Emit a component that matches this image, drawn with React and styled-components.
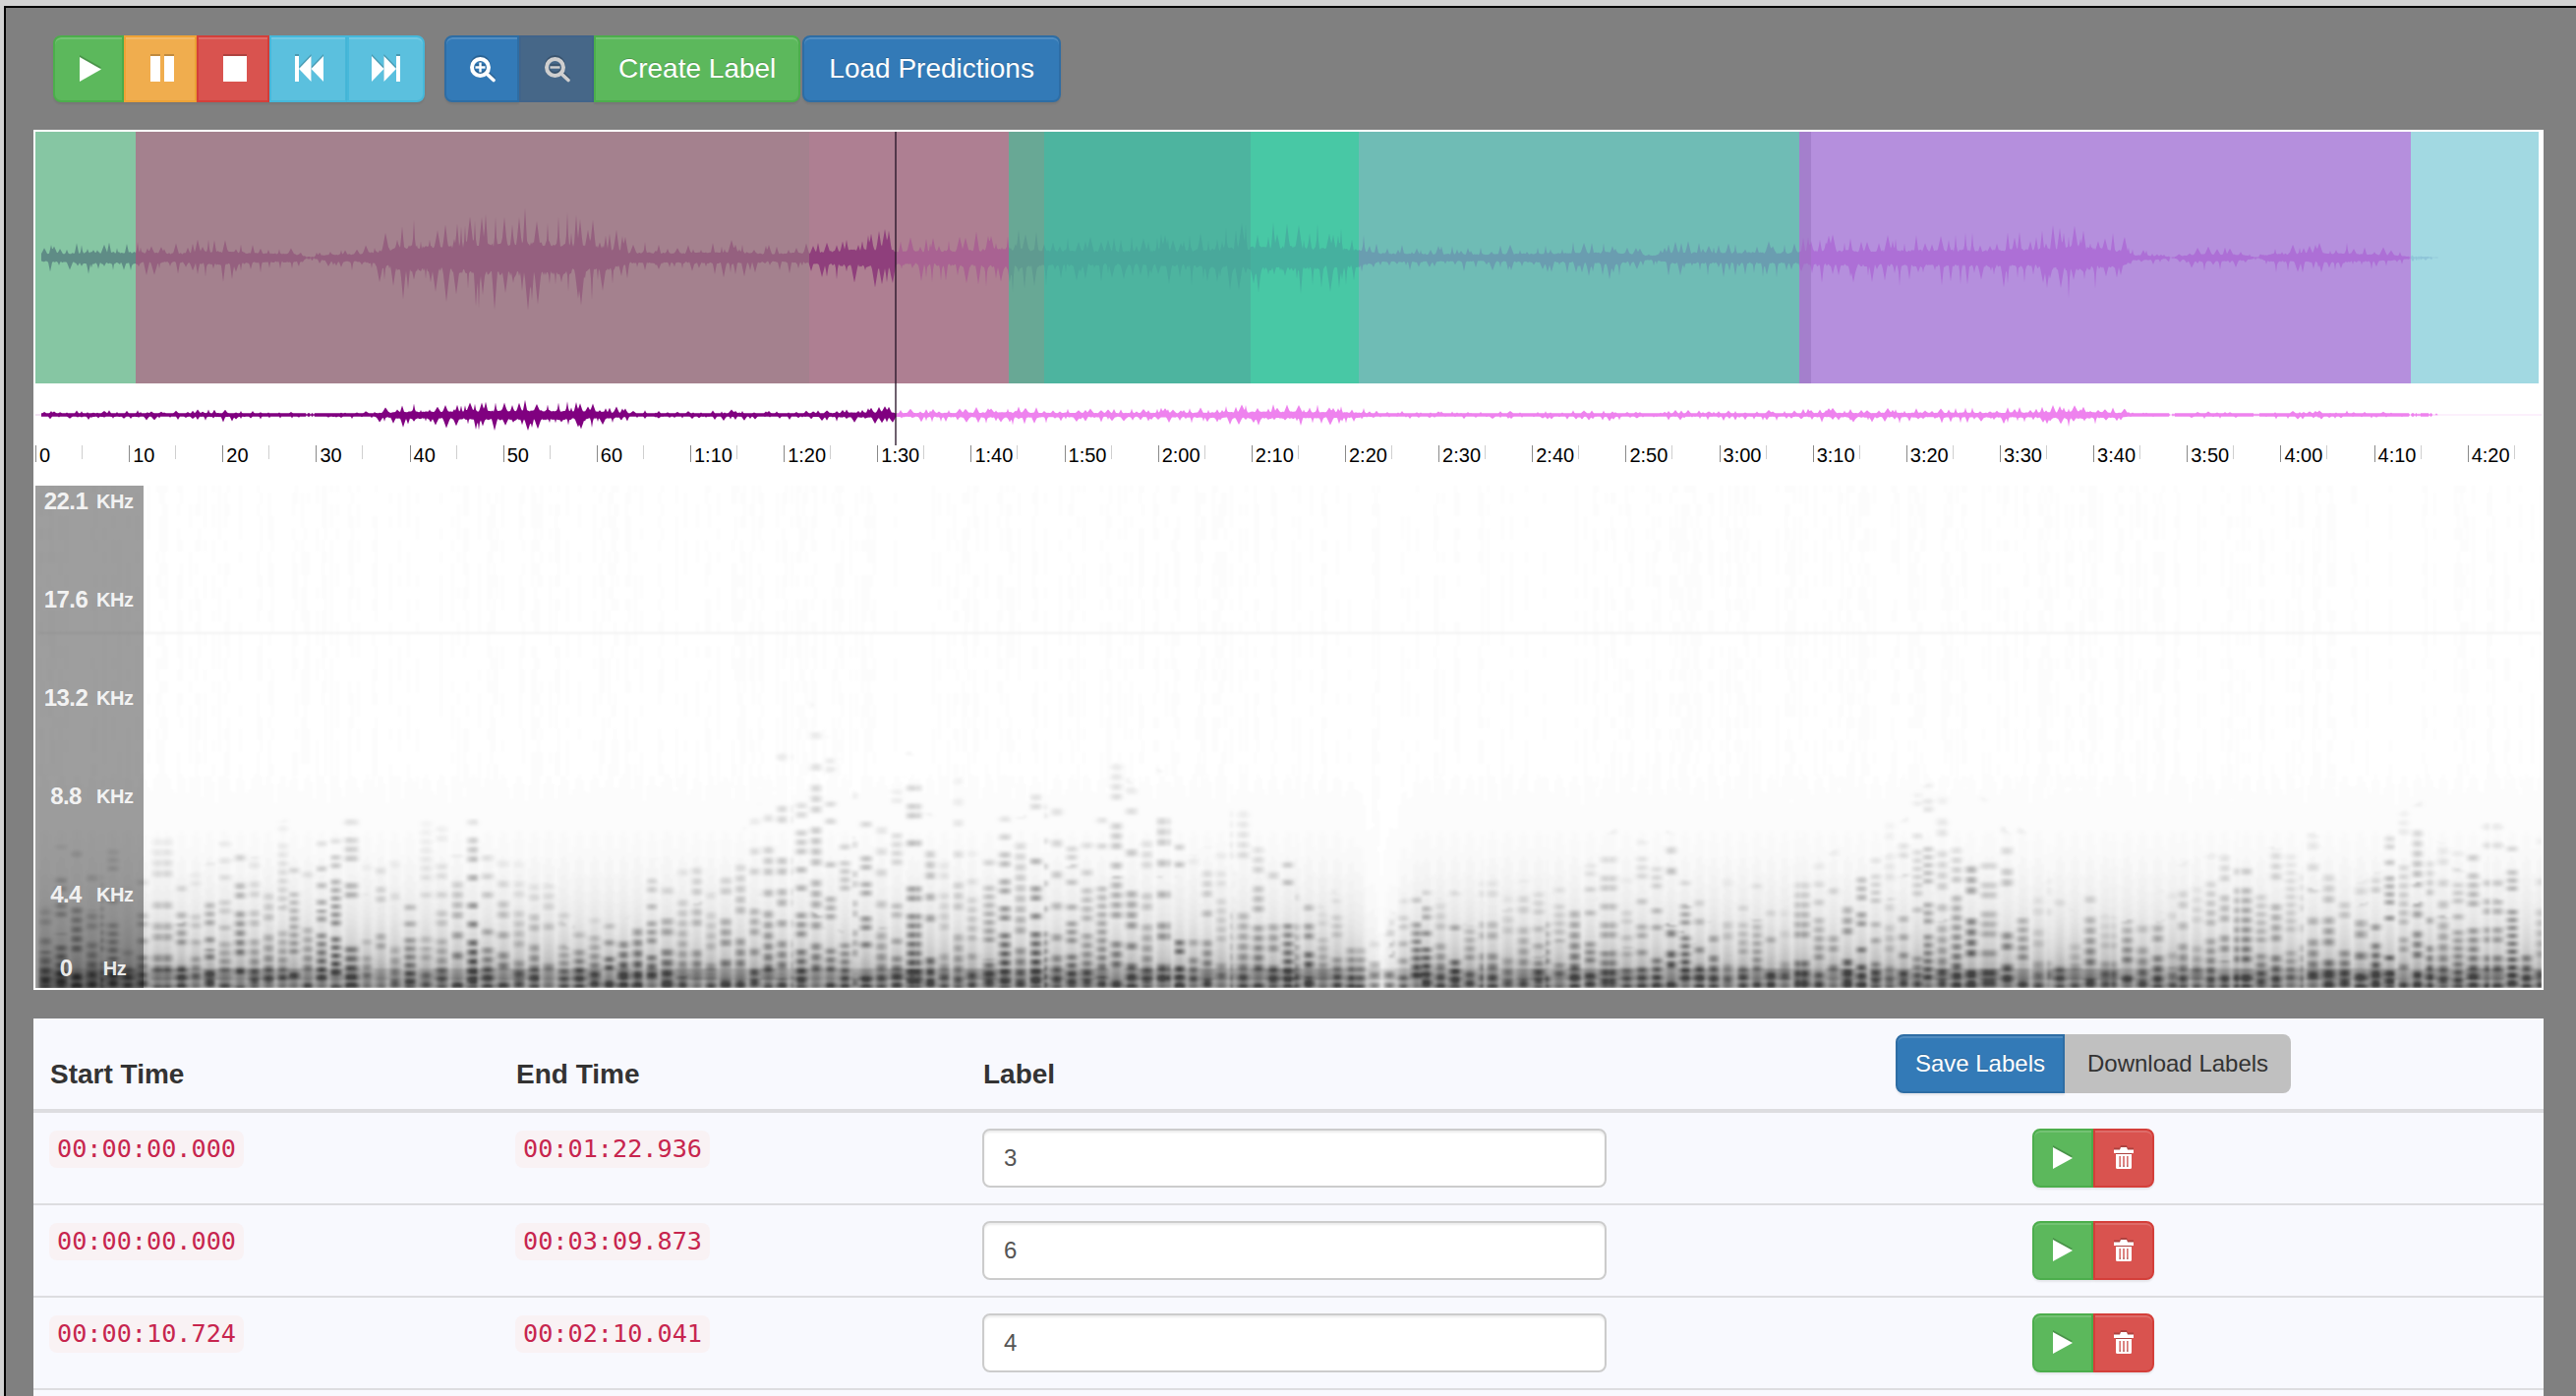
import React, { useMemo } from 'react';
import styled, { createGlobalStyle, css } from 'styled-components';

const GlobalStyle = createGlobalStyle`
  html, body {
    margin: 0;
    height: 100%;
    overflow: hidden;
    background: #d2d2d2;
    font-family: 'Liberation Sans', Arial, sans-serif;
  }
  * {
    box-sizing: border-box;
  }
`;

const tones = {
  success: css`
    background: #5cb85c;
    border-color: #4cae4c;
  `,
  warning: css`
    background: #f0ad4e;
    border-color: #eea236;
  `,
  danger: css`
    background: #d9534f;
    border-color: #d43f3a;
  `,
  info: css`
    background: #5bc0de;
    border-color: #46b8da;
  `,
  primary: css`
    background: #337ab7;
    border-color: #2e6da4;
  `,
  disabled: css`
    background: #466788;
    border-color: #41648a;
    color: #cfcfcf;
    box-shadow: none;
  `,
};

const Frame = styled.div`
  display: flex;
  flex-direction: column;
  height: calc(100vh - 6px);
  margin: 6px 0 0 4px;
  padding: 0 33px 0 28px;
  background: #808080;
  border-top: 2px solid #000;
  border-left: 2px solid #000;
  overflow: hidden;
`;
const Toolbar = styled.div`
  display: flex;
  gap: 20px;
  margin: 28px 0 28px 20px;
  height: 68px;
  flex: none;
`;
const BtnGroup = styled.div`
  display: flex;
  gap: ${(p) => p.$gap || 0}px;
`;
const Btn = styled.button`
  display: flex;
  align-items: center;
  justify-content: center;
  height: 68px;
  padding: 0 ${(p) => 23 - (p.$nudge || 0)}px 0 ${(p) => 23 + (p.$nudge || 0)}px;
  border: 2px solid;
  border-radius: ${(p) => (p.$round === 'left' ? '8px 0 0 8px' : p.$round === 'right' ? '0 8px 8px 0' : p.$round === 'both' ? '8px' : '0')};
  color: #fff;
  font-family: inherit;
  font-size: 28px;
  text-shadow: 0 -1px 0 rgba(0, 0, 0, 0.2);
  box-shadow: inset 0 2px 0 rgba(255, 255, 255, 0.15), 0 2px 2px rgba(0, 0, 0, 0.075);
  ${(p) => tones[p.$tone]}
`;
const LoadBtn = styled(Btn)`
  padding: 0 25px;
`;
const Glyph = styled.svg`
  display: block;
  fill: currentColor;
  overflow: visible;
  filter: drop-shadow(0 -2px 0 rgba(0, 0, 0, 0.2));
`;
const Workspace = styled.div`
  flex: none;
  position: relative;
  border: 2px solid #fff;
  background: #fff;
`;
const RegionStrip = styled.div`
  position: relative;
  display: flex;
  height: 256px;
`;
const Region = styled.div`
  flex: none;
  height: 100%;
  width: ${(p) => p.$w}px;
  background: ${(p) => p.$c};
`;
const WaveOverlay = styled.svg`
  position: absolute;
  left: 0;
  top: 0;
  pointer-events: none;
`;
const MiniWave = styled.svg`
  display: block;
`;
const Cursor = styled.div`
  position: absolute;
  left: 874px;
  top: 0;
  width: 2px;
  height: 319px;
  background: rgba(40, 20, 40, 0.68);
`;
const Timeline = styled.div`
  display: flex;
  height: 41px;
`;
const TimeCell = styled.div`
  position: relative;
  flex: 0 0 95.15px;
  height: 20px;
  padding-left: 4px;
  color: #000;
  font-size: 20px;
  line-height: 20px;
  white-space: nowrap;
  &::before {
    content: '';
    position: absolute;
    left: 0;
    top: 0;
    width: 1px;
    height: 17px;
    background: #8a8a8a;
  }
  &::after {
    content: '';
    position: absolute;
    left: 47px;
    top: 0;
    width: 1px;
    height: 14px;
    background: #cfcfcf;
  }
  &:last-child {
    flex: 1 1 0;
    min-width: 0;
  }
`;
const Spectrogram = styled.div`
  position: relative;
  height: 511px;
  background: #fff;
  overflow: hidden;
`;
const SpectrogramImage = styled.svg`
  display: block;
`;
const FreqScale = styled.div`
  position: absolute;
  left: 0;
  top: 0;
  bottom: 0;
  width: 110px;
  background: rgba(0, 0, 0, 0.38);
  color: rgba(255, 255, 255, 0.9);
`;
const FreqRow = styled.div`
  display: grid;
  grid-template-columns: 62px 37px;
  align-items: center;
  height: ${(p) => p.$h}px;
  &:first-child {
    margin-top: -34px;
  }
`;
const FreqValue = styled.span`
  font-size: 24px;
  font-weight: 700;
  letter-spacing: -0.6px;
  text-align: center;
`;
const FreqUnit = styled.span`
  font-size: 20px;
  font-weight: 700;
  letter-spacing: -0.5px;
  text-align: center;
`;
const TablePanel = styled.div`
  flex: 1;
  margin-top: 29px;
  background: #f8f9fe;
`;
const TableRow = styled.div`
  display: grid;
  grid-template-columns: 474px 475px 688px 1fr;
  padding-top: ${(p) => (p.$head ? 0 : 16)}px;
  height: ${(p) => (p.$head ? 96 : 94)}px;
  border-bottom: ${(p) => (p.$head ? 4 : 2)}px solid #dddde0;
`;
const HeadCell = styled.div`
  align-self: end;
  padding: 0 16px 15px 17px;
  color: #333;
  font-size: 28px;
  font-weight: 700;
  line-height: 40px;
`;
const ActionCell = styled.div`
  display: flex;
  justify-content: center;
  align-self: ${(p) => (p.$head ? 'start' : 'auto')};
  margin-top: ${(p) => (p.$head ? 16 : 0)}px;
`;
const Cell = styled.div`
  padding: 2px 16px 0;
`;
const LabelCell = styled.div`
  padding: 0 16px;
`;
const TimeCode = styled.code`
  display: inline-block;
  height: 38px;
  padding: 0 8px;
  border-radius: 8px;
  background: #f9f2f4;
  color: #c7254e;
  font-family: 'DejaVu Sans Mono', 'Liberation Mono', monospace;
  font-size: 25.2px;
  line-height: 38px;
`;
const LabelInput = styled.input`
  display: block;
  width: 635px;
  height: 60px;
  padding: 0 20px;
  border: 2px solid #ccc;
  border-radius: 8px;
  background: #fff;
  color: #555;
  font-family: inherit;
  font-size: 24px;
  box-shadow: inset 0 2px 2px rgba(0, 0, 0, 0.075);
  outline: none;
`;
const SaveBtn = styled(Btn)`
  height: 60px;
  padding: 0 18px;
  font-size: 24px;
`;
const DownloadBtn = styled.button`
  height: 60px;
  padding: 0 23px;
  border: 0;
  border-radius: 0 8px 8px 0;
  background: #c0c0c0;
  color: #333;
  font-family: inherit;
  font-size: 24px;
`;
const RowBtn = styled(Btn)`
  width: 62px;
  height: 60px;
  padding: 0;
`;

// seeded so the drawings stay the same on every render
const seeded = (seed) => () => {
  seed = (seed + 0x6d2b79f5) | 0;
  let t = Math.imul(seed ^ (seed >>> 15), 1 | seed);
  t = (t + Math.imul(t ^ (t >>> 7), 61 | t)) ^ t;
  return ((t ^ (t >>> 14)) >>> 0) / 4294967296;
};
const hash = (a, b) => {
  const s = Math.sin(a * 127.1 + b * 311.7) * 43758.5453;
  return s - Math.floor(s);
};
const lerpTable = (table, x) => {
  if (x <= table[0][0]) return table[0][1];
  for (let i = 1; i < table.length; i++) {
    if (x <= table[i][0]) {
      const [x0, y0] = table[i - 1];
      const [x1, y1] = table[i];
      return y0 + ((y1 - y0) * (x - x0)) / (x1 - x0);
    }
  }
  return table[table.length - 1][1];
};

// widths and colours of the label regions, left to right
const regions = [
  { w: 102, c: '#86c6a3', wave: '#5f8c86' },
  { w: 685, c: '#a4818e', wave: '#95607f' },
  { w: 203, c: '#ae7f92', wave: '#8f3f7c', after: '#a96292' },
  { w: 36, c: '#68a895', wave: '#5f9a90' },
  { w: 210, c: '#4db49f', wave: '#49a89b' },
  { w: 110, c: '#48c8a5', wave: '#46b09f' },
  { w: 448, c: '#6fbcb5', wave: '#6a9db0' },
  { w: 12, c: '#a47fcc', wave: '#a46fc9' },
  { w: 610, c: '#b58fdd', wave: '#ad6fd6' },
  { w: 130, c: '#a2d9e2', wave: '#8fc5d8' },
];

// peak amplitude of the track by x, in page pixels
const ampTable = [
  [42, 13], [60, 14], [90, 18], [137, 19], [180, 15], [220, 23], [260, 16], [300, 13], [310, 3], [320, 4],
  [330, 10], [370, 14], [395, 30], [410, 40], [450, 38], [470, 44], [536, 54], [590, 44], [620, 36], [640, 18],
  [700, 16], [745, 20], [780, 13], [820, 18], [860, 26], [905, 30], [912, 20], [1000, 28], [1020, 33], [1060, 27],
  [1120, 22], [1200, 25], [1260, 35], [1320, 38], [1382, 28], [1400, 15], [1500, 12], [1600, 16], [1640, 20],
  [1680, 7], [1700, 18], [1820, 18], [1850, 24], [1950, 26], [2060, 28], [2115, 38], [2160, 24], [2170, 9],
  [2190, 7], [2210, 3], [2240, 13], [2280, 10], [2295, 2], [2310, 13], [2380, 16], [2430, 10], [2450, 4], [2470, 3], [2480, 0.8],
];
const CURSOR_X = 875;
const WAVE_START = 6;
const WAVE_END = 2444;
const INNER_W = 2549;

const buildSpikes = (rnd) => {
  const spikes = new Float32Array(2600);
  for (let x = 0; x < 2600; x += 3 + Math.floor(rnd() * 10)) {
    const h = 0.4 + 0.6 * Math.pow(rnd(), 0.9);
    const w = 1 + Math.floor(rnd() * 4);
    for (let i = -w; i <= w; i++) {
      if (x + i >= 0) spikes[x + i] = Math.max(spikes[x + i], h * (1 - Math.abs(i) / (w + 1)));
    }
  }
  return spikes;
};
const buildSamples = () => {
  const rnd = seeded(41);
  const upSpikes = buildSpikes(rnd);
  const downSpikes = buildSpikes(rnd);
  const samples = [];
  for (let x = WAVE_START; x <= WAVE_END; x += 1) {
    const env = lerpTable(ampTable, x + 36);
    const up = env * Math.max(upSpikes[x], 0.22 + rnd() * 0.1);
    const down = env * 1.15 * Math.max(downSpikes[x], 0.22 + rnd() * 0.1);
    const silent = env < 4 && rnd() > 0.55;
    samples.push({ x, up: silent ? 0.2 : up, down: silent ? 0.2 : down });
  }
  return samples;
};
const wavePath = (samples, from, to, cy, scale, minAmp = 0) => {
  const part = samples.filter((s) => s.x >= from && s.x <= to);
  if (!part.length) return '';
  const top = part.map((s) => `${s.x} ${(cy - (s.up < 0.5 ? s.up : Math.max(s.up * scale, minAmp))).toFixed(1)}`);
  const bottom = part.map((s) => `${s.x} ${(cy + (s.down < 0.5 ? s.down : Math.max(s.down * scale, minAmp))).toFixed(1)}`).reverse();
  return `M${top.join('L')}L${bottom.join('L')}Z`;
};

// how high the energy reaches in the spectrogram: [x, top y], both in the 1568 wide view
const reachPoints = [
  [22, 520], [88, 520], [130, 510], [200, 500], [230, 510], [290, 510], [340, 530], [352, 560], [370, 555], [400, 530],
  [440, 500], [470, 450], [490, 440], [520, 490], [550, 470], [600, 490], [640, 480], [680, 460], [720, 500], [760, 500],
  [800, 530], [825, 570], [840, 575], [860, 530], [900, 540], [960, 530], [990, 510], [1050, 530], [1090, 540], [1150, 500],
  [1190, 480], [1240, 520], [1290, 550], [1380, 510], [1430, 520], [1480, 490], [1530, 510], [1550, 515],
];
const reachTable = reachPoints.map(([x, y]) => [x * 1.671 - 36, (601 - y) * 1.671]);

const buildSpectrogram = () => {
  const levels = {};
  const dx = 3;
  const dy = 2;
  const H = 511;
  for (let c = 0; c * dx < INNER_W; c++) {
    const x = c * dx;
    // notes change every so often, so strips and rows don't line up across the whole width
    const group = Math.floor(x / 64);
    const stripX = x + 5 * Math.sin(x * 0.013 + hash(group, 1) * 4);
    const stripId = Math.floor(stripX / 15);
    const stripPos = (stripX % 15) / 15;
    const stripShape = Math.pow(Math.sin(Math.PI * stripPos), 0.9);
    const stripAmp = 0.35 + 0.65 * hash(stripId, 9);
    const cluster = 0.6 + 0.4 * Math.sin(x * 0.045 + 1.3 * hash(Math.floor(x / 140), 2));
    const reach = lerpTable(reachTable, x) * (0.75 + 0.4 * hash(stripId, 21));
    const quiet = 1 - 0.75 * Math.exp(-Math.pow((x - 1368) / 22, 2));
    const grain = hash(c, 7);
    const spacing = 8 + 3 * hash(stripId, 5);
    const rowOffset = 9 * hash(stripId, 6);
    for (let r = 0; r * dy < H; r++) {
      const h = r * dy;
      const y = H - (r + 1) * dy;
      const t = h / reach;
      const rowPos = (h + rowOffset) / spacing;
      const noteRow = Math.floor(rowPos);
      const rowShape = Math.pow(Math.sin(Math.PI * (rowPos - noteRow)), 1.1);
      const on = hash(noteRow, stripId + 11);
      let d = (0.2 * Math.exp(-h / 13) + 0.4 * Math.exp(-h / 52)) * quiet * (0.55 + 0.45 * stripShape);
      if (t < 1 && on > 0.12 + t * 0.55) {
        d += (0.08 + 0.5 * Math.pow(1 - t, 0.8)) * stripShape * stripAmp * rowShape * (0.6 + 0.4 * cluster);
      }
      if (h > 6 && h < 20) d += 0.12 * (0.4 + hash(stripId, 4));
      if (h > 100 && grain > 0.6) d = Math.max(d, 0.016 * hash(c, Math.floor(r / 6)));
      if (y >= 148 && y < 151) d = Math.max(d, 0.05);
      const level = Math.min(60, Math.round(d * 80));
      if (level >= 1) {
        levels[level] = (levels[level] || '') + `M${x} ${y}h${dx}v${dy}h${-dx}z`;
      }
    }
  }
  return levels;
};

const IconPlay = ({ w = 22, h = 25 }) => (
  <Glyph width={w} height={h} viewBox="0 0 22 25" preserveAspectRatio="none">
    <polygon points="0,0 22,12.5 0,25" />
  </Glyph>
);
const IconPause = () => (
  <Glyph width={24} height={26} viewBox="0 0 24 26">
    <rect x="0" y="0" width="10" height="26" />
    <rect x="14" y="0" width="10" height="26" />
  </Glyph>
);
const IconStop = () => (
  <Glyph width={24} height={26} viewBox="0 0 24 26">
    <rect width="24" height="26" />
  </Glyph>
);
const IconBackward = () => (
  <Glyph width={29} height={26} viewBox="0 0 29 26">
    <rect width="4" height="26" />
    <polygon points="4,13 16.5,0 16.5,26" />
    <polygon points="16.5,13 29,0 29,26" />
  </Glyph>
);
const IconForward = () => (
  <Glyph width={29} height={26} viewBox="0 0 29 26">
    <polygon points="0,0 12.5,13 0,26" />
    <polygon points="12.5,0 25,13 12.5,26" />
    <rect x="25" width="4" height="26" />
  </Glyph>
);
const IconZoom = ({ plus }) => (
  <Glyph width={26} height={25} viewBox="0 0 26 25">
    <circle cx="10.5" cy="10.5" r="8.5" fill="none" stroke="currentColor" strokeWidth="4" />
    <path d="M17 17l7 6.500" fill="none" stroke="currentColor" strokeWidth="3.600" strokeLinecap="round" />
    <rect x="5.500" y="9.300" width="10" height="2.400" />
    {plus && <rect x="9.300" y="5.500" width="2.400" height="10" />}
  </Glyph>
);
const IconTrash = () => (
  <Glyph width={20} height={22} viewBox="0 0 20 22">
    <path
      fillRule="evenodd"
      d="M7 0h6l1 2.500h6V6H0V2.500h6zM2 7h16v13.500a1.500 1.500 0 0 1-1.500 1.500h-13A1.500 1.500 0 0 1 2 20.500zM5.500 9v11h1.300V9zM9.300 9v11h1.400V9zM13.200 9v11h1.300V9z"
    />
  </Glyph>
);

const timeLabels = ['0', '10', '20', '30', '40', '50', '60', '1:10', '1:20', '1:30', '1:40', '1:50', '2:00', '2:10', '2:20', '2:30', '2:40', '2:50', '3:00', '3:10', '3:20', '3:30', '3:40', '3:50', '4:00', '4:10', '4:20'];
const freqLabels = [
  { value: '22.1', unit: 'KHz', h: 100 },
  { value: '17.6', unit: 'KHz', h: 100 },
  { value: '13.2', unit: 'KHz', h: 100 },
  { value: '8.8', unit: 'KHz', h: 100 },
  { value: '4.4', unit: 'KHz', h: 100 },
  { value: '0', unit: 'Hz', h: 50 },
];
const rows = [
  { start: '00:00:00.000', end: '00:01:22.936', label: '3' },
  { start: '00:00:00.000', end: '00:03:09.873', label: '6' },
  { start: '00:00:10.724', end: '00:02:10.041', label: '4' },
];

const WaveForm = ({ samples }) => {
  const slices = [];
  let left = 0;
  regions.forEach((r) => {
    const right = left + r.w;
    if (r.after) {
      slices.push({ from: left, to: CURSOR_X, fill: r.wave });
      slices.push({ from: CURSOR_X, to: right, fill: r.after });
    } else {
      slices.push({ from: left, to: right, fill: r.wave });
    }
    left = right;
  });
  return (
    <WaveOverlay width={INNER_W} height="256">
      {slices.map((s) => (
        <path key={s.from} d={wavePath(samples, s.from, s.to, 128, 1)} fill={s.fill} />
      ))}
    </WaveOverlay>
  );
};

const App = () => {
  const samples = useMemo(buildSamples, []);
  const spectrogram = useMemo(buildSpectrogram, []);

  return (
    <>
      <GlobalStyle />
      <Frame>
        <Toolbar>
          <BtnGroup>
            <Btn $tone="success" $round="left" $nudge={2}><IconPlay /></Btn>
            <Btn $tone="warning" $nudge={2}><IconPause /></Btn>
            <Btn $tone="danger" $nudge={2}><IconStop /></Btn>
            <Btn $tone="info" $nudge={1}><IconBackward /></Btn>
            <Btn $tone="info" $round="right"><IconForward /></Btn>
          </BtnGroup>
          <BtnGroup $gap={2}>
            <BtnGroup>
              <Btn $tone="primary" $round="left" $nudge={1}><IconZoom plus /></Btn>
              <Btn $tone="disabled" $nudge={1}><IconZoom /></Btn>
              <Btn $tone="success" $round="right">Create Label</Btn>
            </BtnGroup>
            <LoadBtn $tone="primary" $round="both">Load Predictions</LoadBtn>
          </BtnGroup>
        </Toolbar>

        <Workspace>
          <RegionStrip>
            {regions.map((r) => (
              <Region key={r.c} $w={r.w} $c={r.c} />
            ))}
            <WaveForm samples={samples} />
          </RegionStrip>
          <MiniWave width={INNER_W} height="63">
            <rect x="0" y="31.500" width={WAVE_START} height="1" fill="#e8c8e8" />
            <rect x={WAVE_END} y="31.500" width={INNER_W - WAVE_END} height="1" fill="#f9e2f9" />
            <path d={wavePath(samples, WAVE_START, CURSOR_X, 32, 0.3, 1.8)} fill="#800080" />
            <path d={wavePath(samples, CURSOR_X, WAVE_END, 32, 0.3, 1.8)} fill="#ee82ee" />
          </MiniWave>
          <Timeline>
            {timeLabels.map((t) => (
              <TimeCell key={t}>{t}</TimeCell>
            ))}
          </Timeline>
          <Spectrogram>
            <SpectrogramImage width={INNER_W} height="511">
              <defs>
                <filter id="soft" x="0" y="0" width="100%" height="100%">
                  <feGaussianBlur stdDeviation="1.4 0.9" />
                </filter>
              </defs>
              <g filter="url(#soft)">
                <rect width={INNER_W} height="511" fill="#fff" />
                {Object.keys(spectrogram).map((level) => {
                  const v = Math.round(255 * (1 - level / 80));
                  return <path key={level} d={spectrogram[level]} fill={`rgb(${v},${v},${v})`} />;
                })}
              </g>
            </SpectrogramImage>
            <FreqScale>
              {freqLabels.map((f) => (
                <FreqRow key={f.value} $h={f.h}>
                  <FreqValue>{f.value}</FreqValue>
                  <FreqUnit>{f.unit}</FreqUnit>
                </FreqRow>
              ))}
            </FreqScale>
          </Spectrogram>
          <Cursor />
        </Workspace>

        <TablePanel>
          <TableRow $head>
            <HeadCell>Start Time</HeadCell>
            <HeadCell>End Time</HeadCell>
            <HeadCell>Label</HeadCell>
            <ActionCell $head>
              <BtnGroup>
                <SaveBtn $tone="primary" $round="left">Save Labels</SaveBtn>
                <DownloadBtn>Download Labels</DownloadBtn>
              </BtnGroup>
            </ActionCell>
          </TableRow>
          {rows.map((row) => (
            <TableRow key={row.end}>
              <Cell><TimeCode>{row.start}</TimeCode></Cell>
              <Cell><TimeCode>{row.end}</TimeCode></Cell>
              <LabelCell><LabelInput defaultValue={row.label} /></LabelCell>
              <ActionCell>
                <BtnGroup>
                  <RowBtn $tone="success" $round="left"><IconPlay w={20} h={22} /></RowBtn>
                  <RowBtn $tone="danger" $round="right"><IconTrash /></RowBtn>
                </BtnGroup>
              </ActionCell>
            </TableRow>
          ))}
        </TablePanel>
      </Frame>
    </>
  );
};

export default App;
